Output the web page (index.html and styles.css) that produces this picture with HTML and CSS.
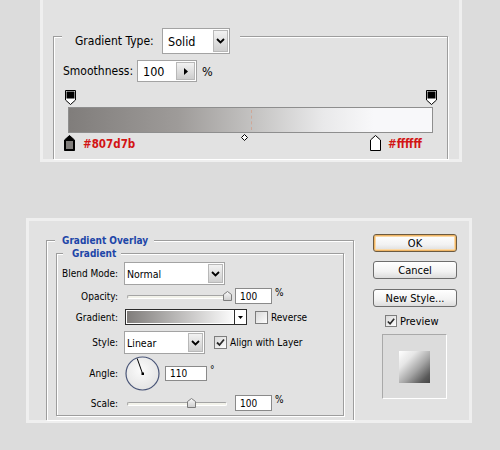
FILE: index.html
```html
<!DOCTYPE html>
<html lang="en">
<head>
<meta charset="utf-8">
<title>Gradient Editor</title>
<link rel="stylesheet" href="styles.css">
</head>
<body>

<!-- Gradient editor strip -->
<div class="panel panel-top">
  <div class="group group-editor">
    <div class="group-title">
      <span class="lbl">Gradient Type:</span>
      <div class="select select-type">
        <span class="select-value">Solid</span>
        <span class="select-btn"><svg width="9" height="6" viewBox="0 0 9 6"><polyline points="1,1 4.5,4.5 8,1" fill="none" stroke="#000" stroke-width="1.8"/></svg></span>
      </div>
    </div>

    <div class="smooth-row">
      <span class="lbl lbl-smooth">Smoothness:</span>
      <div class="spin">
        <span class="spin-value">100</span>
        <span class="spin-btn"><svg width="4" height="7" viewBox="0 0 4 7"><polygon points="0,0 4,3.5 0,7" fill="#000"/></svg></span>
      </div>
      <span class="unit">%</span>
    </div>

    <div class="editor">
      <!-- opacity stops -->
      <svg class="stop stop-op-left" width="11" height="15" viewBox="0 0 11 15">
        <path d="M0.5 0.5 H10.5 V10 L5.5 14.5 L0.5 10 Z" fill="#fff" stroke="#000"/>
        <rect x="1.5" y="1.5" width="8" height="7" fill="#000"/>
      </svg>
      <svg class="stop stop-op-right" width="11" height="15" viewBox="0 0 11 15">
        <path d="M0.5 0.5 H10.5 V10 L5.5 14.5 L0.5 10 Z" fill="#fff" stroke="#000"/>
        <rect x="1.5" y="1.5" width="8" height="7" fill="#000"/>
      </svg>

      <div class="bar"><span class="midline"></span></div>

      <svg class="stop diamond" width="7" height="7" viewBox="0 0 7 7">
        <polygon points="3.5,0.5 6.5,3.5 3.5,6.5 0.5,3.5" fill="#fff" stroke="#000"/>
      </svg>

      <!-- colour stops -->
      <svg class="stop stop-col-left" width="11" height="16" viewBox="0 0 11 16">
        <path d="M5.5 0.5 L10.5 5 V15.5 H0.5 V5 Z" fill="#000" stroke="#000"/>
        <rect x="2" y="6" width="7" height="8" fill="#807d7b"/>
      </svg>
      <span class="hex hex-left">#807d7b</span>

      <svg class="stop stop-col-right" width="11" height="16" viewBox="0 0 11 16">
        <path d="M5.5 0.5 L10.5 5 V15.5 H0.5 V5 Z" fill="#fff" stroke="#000"/>
      </svg>
      <span class="hex hex-right">#ffffff</span>
    </div>
  </div>
</div>

<!-- Layer style dialog -->
<div class="panel panel-bottom">
  <div class="main">
    <div class="group group-overlay">
      <div class="legend legend-overlay">Gradient Overlay</div>
      <div class="group group-gradient">
        <div class="legend legend-gradient">Gradient</div>

        <div class="frow row-blend">
          <span class="flabel">Blend Mode:</span>
          <div class="select select-blend">
            <span class="select-value">Normal</span>
            <span class="select-btn"><svg width="9" height="6" viewBox="0 0 9 6"><polyline points="1,1 4.5,4.5 8,1" fill="none" stroke="#000" stroke-width="1.8"/></svg></span>
          </div>
        </div>

        <div class="frow row-small">
          <span class="flabel">Opacity:</span>
          <div class="slider">
            <span class="track"></span>
            <svg class="thumb" style="left:96px" width="9" height="10" viewBox="0 0 9 10"><defs><linearGradient id="tg1" x1="0" y1="0" x2="0" y2="1"><stop offset="0" stop-color="#fafafa"/><stop offset="1" stop-color="#cdcdcd"/></linearGradient></defs><path d="M0.5 3.5 L4.5 0.5 L8.5 3.5 V9.5 H0.5 Z" fill="url(#tg1)" stroke="#7c7c7c"/></svg>
          </div>
          <span class="field field-num">100</span>
          <span class="funit">%</span>
        </div>

        <div class="frow row-grad">
          <span class="flabel">Gradient:</span>
          <div class="swatch">
            <span class="swatch-fill"></span>
            <span class="swatch-btn"><svg width="5" height="3" viewBox="0 0 5 3"><polygon points="0,0 5,0 2.5,3" fill="#000"/></svg></span>
          </div>
          <span class="check"></span>
          <span class="ctext">Reverse</span>
        </div>

        <div class="frow row-blend row-style">
          <span class="flabel">Style:</span>
          <div class="select select-style">
            <span class="select-value">Linear</span>
            <span class="select-btn"><svg width="9" height="6" viewBox="0 0 9 6"><polyline points="1,1 4.5,4.5 8,1" fill="none" stroke="#000" stroke-width="1.8"/></svg></span>
          </div>
          <span class="check check-align"><svg width="11" height="11" viewBox="0 0 11 11"><polyline points="2,5.5 4.5,8 9,2.5" fill="none" stroke="#2a2a2a" stroke-width="1.8"/></svg></span>
          <span class="ctext">Align with Layer</span>
        </div>

        <div class="frow row-angle">
          <span class="flabel">Angle:</span>
          <svg class="dial" width="35" height="35" viewBox="0 0 35 35">
            <defs><radialGradient id="dg" cx="0.45" cy="0.4" r="0.6"><stop offset="0" stop-color="#fbfbfb"/><stop offset="1" stop-color="#e4e4e4"/></radialGradient></defs>
            <circle cx="17.5" cy="17.5" r="16.5" fill="url(#dg)" stroke="#4a5678" stroke-width="1.2"/>
            <line x1="17.5" y1="17.5" x2="12.2" y2="2.5" stroke="#000" stroke-width="1"/>
            <rect x="16.5" y="16.5" width="2.5" height="2.5" fill="#000"/>
          </svg>
          <span class="field field-angle">110</span>
          <span class="deg">°</span>
        </div>

        <div class="frow row-small row-scale">
          <span class="flabel">Scale:</span>
          <div class="slider">
            <span class="track"></span>
            <svg class="thumb" style="left:60px" width="9" height="10" viewBox="0 0 9 10"><defs><linearGradient id="tg2" x1="0" y1="0" x2="0" y2="1"><stop offset="0" stop-color="#fafafa"/><stop offset="1" stop-color="#cdcdcd"/></linearGradient></defs><path d="M0.5 3.5 L4.5 0.5 L8.5 3.5 V9.5 H0.5 Z" fill="url(#tg2)" stroke="#7c7c7c"/></svg>
          </div>
          <span class="field field-num">100</span>
          <span class="funit">%</span>
        </div>
      </div>
    </div>
  </div>

  <div class="side">
    <div class="btn btn-default">OK</div>
    <div class="btn btn-cancel">Cancel</div>
    <div class="btn btn-new">New Style...</div>
    <div class="preview-row">
      <span class="check check-preview"><svg width="11" height="11" viewBox="0 0 11 11"><polyline points="2,5.5 4.5,8 9,2.5" fill="none" stroke="#2a2a2a" stroke-width="1.8"/></svg></span>
      <span class="ctext">Preview</span>
    </div>
    <div class="preview-box"><span class="preview-swatch"></span></div>
  </div>
</div>

</body>
</html>
```

FILE: styles.css
```css
* { box-sizing: border-box; }

html, body { margin: 0; padding: 0; }

body {
  width: 500px;
  height: 450px;
  overflow: hidden;
  background: #dcdcdc;
  color: #000;
  font-family: "DejaVu Sans Condensed", "DejaVu Sans", sans-serif;
  font-size: 12px;
}

/* ---------- shared panel + group box ---------- */
.panel {
  background: #e2e2e2;
  border: 3px solid #efefef;
}

.group {
  border: 1px solid #9d9d9d;
  box-shadow: inset 1px 1px 0 #fff, 1px 1px 0 #fff;
}

/* ---------- top panel: gradient editor ---------- */
.panel-top {
  width: 422px;
  height: 162px;
  margin-left: 40px;
  border-top: none;
  padding: 36px 0 0 10px;
}

.group-editor {
  width: 395px;
  height: 123px;
  border-bottom: none;
}

.group-title {
  display: flex;
  align-items: center;
  width: 178px;
  height: 26px;
  margin: -9px 0 0 8px;
  padding: 0 10px 0 13px;
  background: #e2e2e2;
}

.select {
  display: flex;
  align-items: stretch;
  background: #fff;
  border: 1px solid #a3a3a3;
}

.select-value {
  flex: 1;
  display: flex;
  align-items: center;
  padding-left: 5px;
}

.select-btn {
  width: 15px;
  display: flex;
  align-items: center;
  justify-content: center;
  margin: 1px;
  border: 1px solid #b8b8b8;
  background: linear-gradient(#f2f2f2, #cfcfcf);
}

.select-type {
  width: 68px;
  height: 26px;
  margin-left: auto;
  font-size: 12.5px;
}

.smooth-row {
  display: flex;
  align-items: center;
  height: 22px;
  margin: 6px 0 0 9px;
}

.lbl-smooth { width: 74px; }

.spin {
  display: flex;
  width: 60px;
  height: 22px;
  background: #fff;
  border: 1px solid #a3a3a3;
  font-size: 12.5px;
}

.spin-value {
  flex: 1;
  display: flex;
  align-items: center;
  padding-left: 5px;
}

.spin-btn {
  width: 19px;
  display: flex;
  align-items: center;
  justify-content: center;
  margin: 1px 1px 1px 0;
  border: 1px solid #b8b8b8;
  background: linear-gradient(#f2f2f2, #cdcdcd);
}

.unit { margin-left: 5px; font-size: 12.5px; }

/* editor canvas: stops sit at their gradient positions */
.editor {
  position: relative;
  height: 68px;
  margin-top: 6px;
}

.stop { position: absolute; display: block; }
.stop-op-left { left: 11px; top: 2px; }
.stop-op-right { left: 372px; top: 2px; }
.stop-col-left { left: 10px; top: 47px; }
.stop-col-right { left: 316px; top: 47px; }
.diamond { left: 187px; top: 46px; }

.bar {
  position: absolute;
  left: 14px;
  top: 19px;
  width: 365px;
  height: 26px;
  border: 1px solid #8e8e8e;
  background: linear-gradient(to right, #807d7b 0%, #9e9b99 30%, #c6c5c4 52%, #e9e9ea 70%, #f8f8fa 84%, #f8f8fa 100%);
}

.midline {
  position: absolute;
  left: 182px;
  top: 2px;
  bottom: 2px;
  border-left: 1px dashed #cfa898;
}

.hex {
  position: absolute;
  top: 50px;
  color: #d21414;
  font-weight: bold;
  font-size: 11.5px;
  line-height: 13px;
}
.hex-left { left: 29px; }
.hex-right { left: 334px; }

/* ---------- bottom panel: layer style dialog ---------- */
.panel-bottom {
  display: flex;
  width: 446px;
  height: 205px;
  margin: 56px 0 0 26px;
  font-size: 10px;
}

.main { padding: 19px 0 0 17px; }

.group-overlay {
  width: 308px;
  height: 180px;
  border-bottom: none;
}

.legend {
  width: fit-content;
  height: 13px;
  line-height: 13px;
  margin-top: -7px;
  background: #e2e2e2;
  color: #1d46a8;
  font-weight: bold;
  font-size: 10px;
}
.legend-overlay { margin-left: 8px; padding: 0 6px 0 7px; }
.legend-gradient { margin-left: 6px; padding: 0 5px 0 9px; }

.group-gradient {
  width: 288px;
  height: 163px;
  margin: 6px 0 0 9px;
}

.frow {
  display: flex;
  align-items: center;
}

.flabel {
  width: 61px;
  margin-right: 6px;
  text-align: right;
  white-space: nowrap;
}

.row-blend { height: 23px; margin-top: 2px; }
.row-small { height: 16px; margin-top: 3px; }
.row-grad { height: 16px; margin-top: 5px; }
.row-style { margin-top: 6px; }
.row-angle { height: 35px; margin-top: 2px; }
.row-scale { margin-top: 4px; }

.select-blend { width: 101px; height: 23px; }
.select-style { width: 81px; height: 23px; }
.select-blend .select-value,
.select-style .select-value { padding-left: 2px; font-size: 10.5px; }

.slider {
  position: relative;
  width: 105px;
  height: 16px;
  margin-left: 3px;
}

.track {
  position: absolute;
  left: 0;
  top: 7px;
  width: 100px;
  height: 4px;
  border: 1px solid;
  border-color: #a4a4a4 #fff #fff #a4a4a4;
  border-radius: 2px;
  background: #f2f2ea;
}

.thumb { position: absolute; top: 3px; }

.field {
  display: flex;
  align-items: center;
  height: 16px;
  padding-left: 4px;
  background: #fff;
  border: 1px solid #8a8a8a;
}
.field-num { width: 37px; margin-left: 3px; }
.funit { margin-left: 3px; align-self: flex-start; margin-top: -1px; }

.swatch {
  display: flex;
  width: 122px;
  height: 16px;
  margin-left: 1px;
  border: 1px solid #2c2c2c;
  background: #fff;
}
.swatch-fill {
  flex: 1;
  margin: 1px;
  background: linear-gradient(to right, #807d7b, #fbfbfb);
}
.swatch-btn {
  width: 12px;
  display: flex;
  align-items: center;
  justify-content: center;
  border-left: 1px solid #2c2c2c;
}

.check {
  display: flex;
  align-items: center;
  justify-content: center;
  width: 13px;
  height: 13px;
  margin-left: 8px;
  border: 1px solid #7d7d7d;
  background: linear-gradient(135deg, #d9d9d9, #fdfdfd);
}
.check-align { margin-left: 9px; }
.ctext { margin-left: 3px; white-space: nowrap; }

.dial { display: block; margin-left: 1px; }
.field-angle { width: 42px; height: 15px; margin-left: 5px; }
.deg { margin-left: 3px; align-self: flex-start; margin-top: 9px; line-height: 10px; }

/* right column */
.side {
  width: 84px;
  margin: 13px 0 0 19px;
}

.btn {
  display: flex;
  align-items: center;
  justify-content: center;
  height: 18px;
  border: 1px solid #6e6e6e;
  border-radius: 3px;
  background: linear-gradient(#ffffff, #f2f2f2 60%, #dcdcdc);
  font-size: 11px;
}
.btn-default {
  border-color: #6c5a40;
  box-shadow: inset 0 0 0 1px #efb565, inset 0 0 0 2px #fbd9a6;
}
.btn-cancel { margin-top: 9px; }
.btn-new { margin-top: 10px; }

.preview-row {
  display: flex;
  align-items: center;
  height: 12px;
  margin: 8px 0 0 12px;
  font-size: 11px;
}
.check-preview { width: 12px; height: 12px; margin-left: 0; }

.preview-box {
  display: flex;
  align-items: center;
  justify-content: center;
  width: 65px;
  height: 65px;
  margin: 7px 0 0 9px;
  border: 1px solid;
  border-color: #a9a9a9 #fff #fff #a9a9a9;
  background: #dcdcdc;
}

.preview-swatch {
  width: 31px;
  height: 32px;
  background: linear-gradient(135deg, #ffffff 0%, #e6e6e6 28%, #a4a4a4 58%, #5a5a5a 85%, #454545 100%);
}
```
